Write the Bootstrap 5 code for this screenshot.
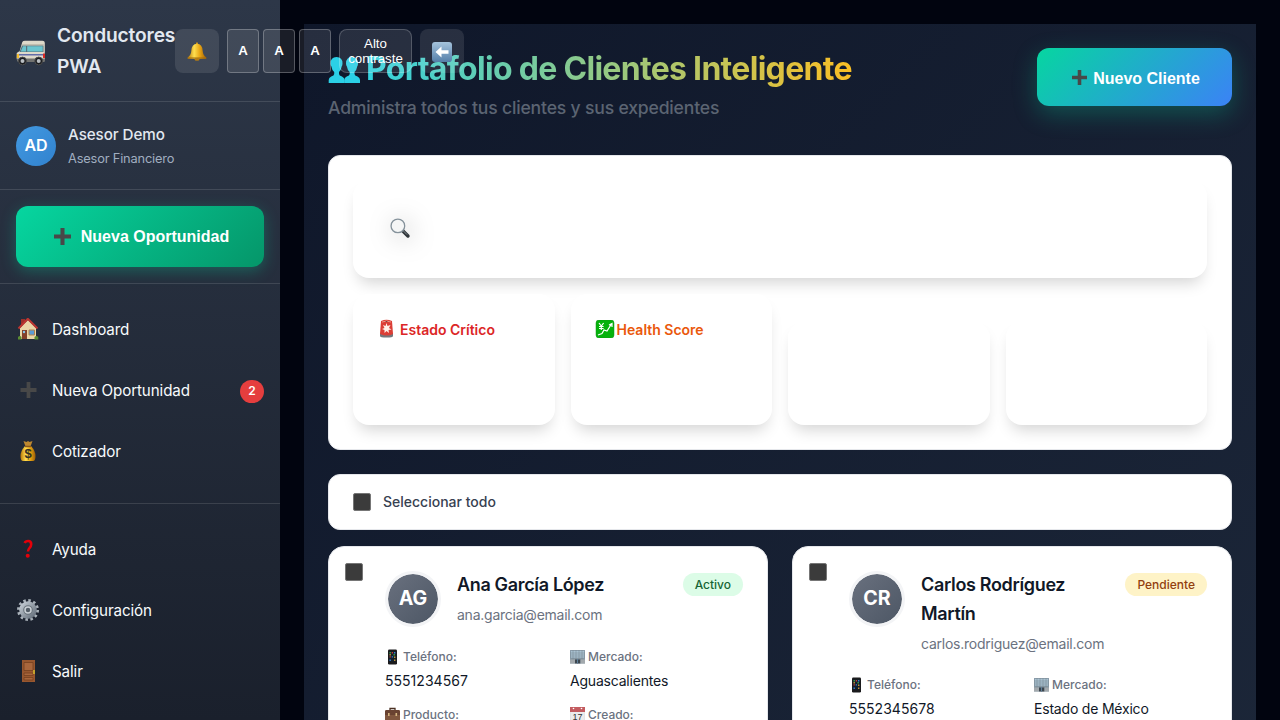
<!DOCTYPE html>
<html lang="es">
<head>
<meta charset="utf-8">
<meta name="viewport" content="width=device-width, initial-scale=1">
<title>Portafolio de Clientes</title>
<link href="https://cdn.jsdelivr.net/npm/bootstrap@5.3.0/dist/css/bootstrap.min.css" rel="stylesheet">
<style>
body{background:#01040f;font-family:Inter,"Noto Sans",sans-serif;line-height:1.6;height:100vh;overflow:hidden;color:#111827}
svg{display:block;flex:none}
.side{width:280px;flex:none;background:linear-gradient(180deg,#2d3748,#1a202c);position:relative;z-index:2}
.side section,.side header{border-bottom:1px solid rgba(255,255,255,.12)}
.head{height:102px;padding:0 16px}
.van{margin-top:5px}
.brand{font-size:19.2px;letter-spacing:-.14px;font-weight:600;line-height:31px;color:#e2e8f0;margin-left:11px;width:118px;flex:none}
.tool{height:44px;background:rgba(255,255,255,.1);border-radius:8px;flex:none;color:#fff;font-family:"Liberation Sans",Arial,sans-serif;border:0;padding:0}
.sq{width:44px;padding-top:2px}
.letter{width:32px;border:1px solid rgba(255,255,255,.26);border-radius:4px;font-weight:700;font-size:13.3px}
.contrast{width:73px;border:1px solid rgba(255,255,255,.2);font-size:13.3px;line-height:15px}
.user{height:88px;padding:0 16px}
.ava{width:40px;height:40px;background:linear-gradient(135deg,#4299e1,#3182ce);color:#fff;font-weight:600;font-size:16px}
.uname{font-size:15.2px;letter-spacing:-.08px;font-weight:500;color:#e2e8f0;line-height:24px}
.urole{font-size:12.8px;letter-spacing:-.16px;color:#a0aec0;line-height:20px;margin-top:2px}
.cta{height:61px;border:0;border-radius:12px;padding:0 0 0 3px;gap:10px;background:linear-gradient(135deg,#06d6a0,#059669);box-shadow:0 4px 15px rgba(6,214,160,.3);color:#fff;font:700 16px "Liberation Sans",Arial,sans-serif}
.menu{padding:16px 16px 20px}
.menu a{height:61px;color:#f7fafc;text-decoration:none;font-size:15.2px;letter-spacing:-.12px;gap:12px}
.menu svg{margin-top:-4px}
.pill{width:24px;height:23px;margin-top:-1px;background:#e53e3e;border-radius:12px;font-size:12px;font-weight:600;color:#fff}
.page{padding:24px;min-width:0;overflow:hidden;height:100vh}
.board{background:linear-gradient(135deg,#0f172a,#1e293b);padding:24px;height:1080px}
.title{font-size:32px;font-weight:700;letter-spacing:-.7px;line-height:41px;margin:0;white-space:nowrap;color:transparent;background:linear-gradient(90deg,#22d3ee,#fbbf24);-webkit-background-clip:text;background-clip:text;width:526px;padding-left:38px}
.people{left:0;top:9px}
.sub{font-size:17.6px;letter-spacing:-.19px;font-weight:500;color:#5b6472;line-height:28px;margin:5px 0 33px}
.newc{width:195px;height:58px;border:0;border-radius:12px;padding:3px 0 0 3px;gap:6px;background:linear-gradient(135deg,#06d6a0,#3b82f6);box-shadow:0 8px 25px rgba(6,214,160,.28);color:#fff;font:700 16px "Liberation Sans",Arial,sans-serif}
.newc svg{margin-top:-2px}
.panel{background:#fff;border:1px solid #e5e7eb;border-radius:12px}
.soft{background:#fff;border-radius:16px;box-shadow:0 10px 15px -5px rgba(0,0,0,.17)}
.find{height:98px;padding:38px 37px}
.halo{filter:drop-shadow(3px 3px 12px rgba(0,0,0,.25))}
.filters{gap:16px;margin-top:16px;align-items:flex-end}
.filters>div{flex:1 1 0;height:131px;padding:24px;font-size:14px;font-weight:600;line-height:23px;white-space:nowrap}
.filters>.low{height:104px}
.crit{color:#dc2626}.health{color:#ea580c}
.crit svg{margin:1px 5px 0 0}.health svg{margin-top:2px;margin-right:1px}
.box{width:18px;height:18px;background:#3b3b3b;border:1px solid #767676;border-radius:2px;flex:none}
.all{height:56px;padding:0 24px;font-size:14px;color:#374151;gap:12px;font-weight:450}
.client{border-radius:16px;height:500px;padding:24px 24px 24px 56px;position:relative}
.client .box{position:absolute;left:16px;top:16px}
.cava{width:56px;height:56px;border:3px solid #f3f4f6;flex:none;background:linear-gradient(135deg,#6b7280,#4b5563) border-box;background-clip:padding-box;color:#fff;font-weight:700;font-size:19.6px}
.cname{font-size:18px;letter-spacing:-.34px;font-weight:600;line-height:28.8px;color:#111827}
.mail{font-size:14px;letter-spacing:-.24px;line-height:22.4px;color:#6b7280;margin-top:4px}
.tag{font-size:12px;font-weight:500;line-height:23px;height:23px;border-radius:12px;padding:0 12px;margin-top:2px;flex:none}
.ok{background:#dcfce7;color:#166534}.wait{background:#fef3c7;color:#92400e}
.facts{display:grid;grid-template-columns:1fr 1fr;column-gap:12px;row-gap:12px;margin-top:20px}
.lab{font-size:12px;font-weight:500;color:#6b7280;line-height:19.2px;gap:3px}
.val{font-size:14px;letter-spacing:-.2px;line-height:22.4px;margin-top:4px;color:#111827}
.num{letter-spacing:.03px}
</style>
</head>
<body>
<svg width="0" height="0" class="position-absolute">
<defs>
<linearGradient id="gold" x1="0" x2="1"><stop offset="0" stop-color="#b97808"/><stop offset=".35" stop-color="#ffdf50"/><stop offset=".65" stop-color="#e8a514"/><stop offset="1" stop-color="#9c5e06"/></linearGradient>
<linearGradient id="blue" x2="0" y2="1"><stop offset="0" stop-color="#a5c3dc"/><stop offset="1" stop-color="#557fa9"/></linearGradient>
<linearGradient id="steel" x2="1" y2="1"><stop offset="0" stop-color="#c3cbd3"/><stop offset="1" stop-color="#67717d"/></linearGradient>
</defs>
<symbol id="plus" viewBox="0 0 16 16"><path d="M6.100 0h3.800v6.100H16v3.800H9.900V16H6.100V9.900H0V6.100h6.100z" fill="#484848"/></symbol>
<symbol id="phone" viewBox="0 0 14 16"><rect x="2.500" y=".5" width="9" height="15" rx="1.200" fill="#1b1b1d"/><path d="M3.500 2.500h7v10h-7z" fill="#13202b"/><path d="M4 3h1.400v1.400H4zM8 5h1.400v1.400H8z" fill="#3fa34d"/><path d="M6.200 3h1.400v1.400H6.200zM4 7.200h1.400v1.400H4z" fill="#c63a3a"/><path d="M8.500 3h1.400v1.400H8.500zM6.200 7.200h1.400v1.400H6.200zM4 10.500h1.400v1.400H4z" fill="#3d7fd0"/><path d="M4 5h1.400v1.400H4zM8.500 7.500h1.400v1.400H8.500zM8.500 10.500h1.400v1.400H8.500z" fill="#c79535"/></symbol>
<symbol id="office" viewBox="0 0 15 15"><path d="M0 1h15v13.500H0z" fill="#8b9dab"/><path d="M1 2h13v7H1z" fill="#a9c2d2"/><path d="M0 4h15M0 6h15M0 8h15M0 10h15M3 1v13M6 1v13M9 1v13M12 1v13" stroke="#75848f" stroke-width=".5"/><path d="M5 10.500h5.500v4H5z" fill="#3d474f"/><path d="M0 10.500h5v4H0zM10.500 10.500H15v4h-4.500z" fill="#a3a9ad"/><path d="M7.500 10v4.500" stroke="#5e7f9a"/></symbol>
<symbol id="case" viewBox="0 0 15 14"><path d="M5 4V1.500h5V4" fill="none" stroke="#4b3123" stroke-width="1.300"/><rect y="3" width="15" height="11" rx="1.500" fill="#80563e"/><path d="M0 4.500A1.500 1.500 0 0 1 1.500 3h12A1.500 1.500 0 0 1 15 4.500V8H0z" fill="#694231"/><path d="M3 6h1.600v3H3zM10.500 6h1.600v3h-1.600z" fill="#d5b580"/></symbol>
</svg>
<div class="d-flex vh-100 overflow-hidden">
<aside class="side vh-100">
  <header class="head d-flex align-items-center">
    <svg class="van" width="30" height="26" viewBox="0 0 30 26"><path d="M6.300 2Q7 .8 9 .7h17.500q2.200 0 2.300 2V19q0 2-2 2H3Q.7 21 .7 18.500V13l3-2z" fill="#ded9ca"/><path d="M6.500 4h21.200v.7H6z" fill="#b8b4a6"/><path d="M6 5.500h21.500V12H3.500z" fill="#56747c"/><path d="M7 6.300h3V11.500H4.800zM11.200 6.300h15.500v5.200H11.200z" fill="#6bc5cf"/><path d="M1.800 14h26.500v1.500H1.500z" fill="#626da9"/><path d="M1 14h2v4H.8z" fill="#f5bd2b"/><path d="M27 13.500h2V18h-2z" fill="#da2a25"/><path d="M.7 18.500h28.200V21q0 1-1 1H2q-1.300-1-1.300-3.500z" fill="#71726f"/><g fill="#191b1e" stroke="#4b4c4d"><circle cx="6.500" cy="21" r="3.900"/><circle cx="22.700" cy="21" r="3.900"/></g><g fill="#b9bec2"><circle cx="6.500" cy="21" r="2"/><circle cx="22.700" cy="21" r="2"/></g></svg>
    <div class="brand">Conductores PWA</div>
    <div class="d-flex gap-2">
      <button class="tool sq d-flex align-items-center justify-content-center"><svg width="20" height="19" viewBox="0 0 20 19"><path d="M9 1q1-1.500 2 0v1.500H9z" fill="#c99520"/><path d="M4.300 9Q4.500 2 10 1.700 15.500 2 15.700 9q.2 4 3.700 6.500v1.300H.600v-1.300Q4 13 4.300 9z" fill="url(#gold)"/><path d="M1 16h18" stroke="#a16a0a"/><ellipse cx="10" cy="17.400" rx="2.500" ry="1.400" fill="#b77d12"/></svg></button>
      <div class="d-flex gap-1"><button class="tool letter">A</button><button class="tool letter">A</button><button class="tool letter">A</button></div>
      <button class="tool contrast">Alto contraste</button>
      <button class="tool sq d-flex align-items-center justify-content-center"><svg width="20" height="20" viewBox="0 0 20 20"><rect width="20" height="20" rx="3" fill="url(#blue)"/><path d="M3.500 10l6-5.500v3.700h7v3.600h-7v3.700z" fill="#fff"/></svg></button>
    </div>
  </header>
  <section class="user d-flex align-items-center gap-2">
    <div class="ava rounded-circle d-flex align-items-center justify-content-center">AD</div>
    <div class="ms-1"><div class="uname">Asesor Demo</div><div class="urole">Asesor Financiero</div></div>
  </section>
  <section class="p-3">
    <button class="cta w-100 d-flex align-items-center justify-content-center"><svg width="17" height="17"><use href="#plus"/></svg><span>Nueva Oportunidad</span></button>
  </section>
  <section class="menu">
    <a href="#" class="d-flex align-items-center"><svg width="24" height="22" viewBox="0 0 24 22"><path d="M5 1h4v6H5z" fill="#9c302a"/><path d="M4 10l8-8 8 8v11H4z" fill="#ead6a8"/><path d="M2.500 10.500L11.800.8l9.700 9.700" fill="none" stroke="#bd3631" stroke-width="2"/><path d="M6 12h5v9H6z" fill="#83402a"/><path d="M13 12h5.500v5H13z" fill="#5a9bd5" stroke="#b1824f"/><circle cx="8" cy="14" r="1.200" fill="#8ac6ed"/><path d="M2 19q2-2 3.500 0v2.500H2zM18.500 19q2-2 3.800 0v2.500h-3.800z" fill="#5c8d32"/></svg>Dashboard</a>
    <a href="#" class="d-flex align-items-center"><svg width="24" height="16"><use href="#plus" x=".5" width="24" height="16"/></svg>Nueva Oportunidad<span class="pill ms-auto d-flex align-items-center justify-content-center">2</span></a>
    <a href="#" class="d-flex align-items-center"><svg width="24" height="22" viewBox="0 0 24 22"><path d="M7.500 1l3 1 1.500-1 1.500 1 3-1-2 5.500h-5z" fill="#bd8830"/><path d="M9 6h6q4.500 5 4.500 10 0 5-2.500 5H7q-2.500 0-2.500-5Q4.500 11 9 6z" fill="url(#gold)"/><path d="M9 6.500h6" stroke="#89571c" stroke-width="1.500"/><text x="12" y="18" font-family="Liberation Sans" font-weight="700" font-size="13" text-anchor="middle" fill="#333024">$</text></svg>Cotizador</a>
  </section>
  <nav class="menu">
    <a href="#" class="d-flex align-items-center"><svg width="24" height="20" viewBox="0 0 24 20"><path d="M8.700 4Q9.500 2 12.200 2q3 0 3 3.300 0 2-1.700 3.700-1.500 1.700-1.500 3.500" fill="none" stroke="#e40009" stroke-width="2.600"/><circle cx="11.700" cy="16.800" r="2" fill="#e40009"/></svg>Ayuda</a>
    <a href="#" class="d-flex align-items-center"><svg width="24" height="24" viewBox="0 0 24 24"><circle cx="12" cy="12" r="9.500" fill="none" stroke="#aab2ba" stroke-width="3" stroke-dasharray="2.500 2.475"/><circle cx="12" cy="12" r="6.800" fill="#69737c" stroke="url(#steel)" stroke-width="4"/><circle cx="12" cy="12" r="3" fill="#545e68" stroke="#cbd1d7" stroke-width="1.500"/></svg>Configuración</a>
    <a href="#" class="d-flex align-items-center"><svg width="24" height="22" viewBox="0 0 24 22"><path d="M6 0h13v22H6z" fill="#98572f"/><path d="M8 2.500h9v8H8zM8 13h9v2.500H8zM8 17.500h9V20H8z" fill="#a9663c" stroke="#75401f" stroke-width=".8"/><path d="M17 10h2v4h-2z" fill="#c4a12c"/></svg>Salir</a>
  </nav>
</aside>
<main class="page flex-grow-1">
<div class="board">
  <div class="d-flex justify-content-between align-items-start">
    <div>
      <div class="position-relative"><svg class="people position-absolute" width="33" height="27" viewBox="0 0 33 27"><g fill="#2bd0e6"><path id="bust" d="M8.500 0q6 0 6 6.500 0 1.800-.8 3-.6 4-2.700 5.500v2q0 1.500 3 2.500 2.500 1 2.500 3.500V26H.7v-3q0-2.500 2.500-3.500 3-1 3-2.500v-2Q4 13.500 3.400 9.500q-.9-1.200-.9-3Q2.500 0 8.500 0z"/><use href="#bust" x="15.500"/></g></svg><h1 class="title">Portafolio de Clientes Inteligente</h1></div>
      <p class="sub">Administra todos tus clientes y sus expedientes</p>
    </div>
    <button class="newc d-flex align-items-center justify-content-center"><svg width="15" height="15"><use href="#plus"/></svg><span>Nuevo Cliente</span></button>
  </div>
  <div class="panel p-4">
    <div class="soft find"><svg class="halo" width="21" height="21" viewBox="0 0 24 24"><path d="M14.500 14.500l6 6" stroke="#30363a" stroke-width="4" stroke-linecap="round"/><path d="M14.500 14l5 5" stroke="#8c969c"/><circle cx="9" cy="9" r="7.800" fill="#f5f6f6" stroke="#85929b" stroke-width="1.500"/></svg></div>
    <div class="filters d-flex">
      <div class="soft crit d-flex"><svg width="18" height="19" viewBox="0 0 18 19"><path d="M3 14h13v3q0 1.500-6.500 1.500T3 17z" fill="#73777c"/><path d="M4 2q5.500-2.500 11 0l1 13q-6 3-13 0z" fill="#db3e36"/><path d="M5 3q4.500-2 9 0" stroke="#ff9a8d"/><path d="M9.500 4l1 3 3-1-1.500 3 2.500 1.500-3 .5.500 3-2.500-2-2 2v-3L5 10l2.500-1L6 6l2.500 1z" fill="#fff1e9"/></svg>Estado Crítico</div>
      <div class="soft health d-flex"><svg width="21" height="18" viewBox="0 0 21 18"><rect x="1" width="18" height="18" rx="3" fill="#04b20b" stroke="#168d18" stroke-width=".5"/><path d="M3 15l4-1.500 2-3.500 3 1 4.500-7M14 5l3-1.500V7M4 3l2.300 3L8.600 3M6.300 6v4M4 6.500h4.600M4 8.500h4.600" fill="none" stroke="#fff" stroke-width="1.200"/></svg>Health Score</div>
      <div class="soft low"></div><div class="soft low"></div>
    </div>
  </div>
  <div class="panel all d-flex align-items-center mt-4"><span class="box"></span>Seleccionar todo</div>
  <div class="row gx-4 mt-3">
    <div class="col-6"><article class="panel client"><span class="box"></span>
      <div class="d-flex"><div class="cava rounded-circle d-flex align-items-center justify-content-center">AG</div><div class="ms-3 flex-grow-1"><div class="cname">Ana García López</div><div class="mail">ana.garcia@email.com</div></div><span class="tag ok">Activo</span></div>
      <div class="facts">
        <div><div class="lab d-flex align-items-center"><svg width="15" height="16"><use href="#phone"/></svg>Teléfono:</div><div class="val num">5551234567</div></div>
        <div><div class="lab d-flex align-items-center"><svg width="15" height="15"><use href="#office"/></svg>Mercado:</div><div class="val">Aguascalientes</div></div>
        <div class="lab d-flex align-items-center"><svg width="15" height="14"><use href="#case"/></svg>Producto:</div>
        <div class="lab d-flex align-items-center"><svg width="15" height="15" viewBox="0 0 15 15"><path d="M0 1h15v13.500H0z" fill="#ececec" stroke="#c8c8c8" stroke-width=".4"/><path d="M0 0h15v5H0z" fill="#c35c60"/><circle cx="3.500" cy="1.500" r=".8" fill="#fff"/><circle cx="11.500" cy="1.500" r=".8" fill="#fff"/><text x="7.500" y="13" font-family="Liberation Sans" font-size="9" text-anchor="middle" fill="#343434">17</text></svg>Creado:</div>
      </div>
    </article></div>
    <div class="col-6"><article class="panel client"><span class="box"></span>
      <div class="d-flex"><div class="cava rounded-circle d-flex align-items-center justify-content-center">CR</div><div class="mx-3 flex-grow-1"><div class="cname">Carlos Rodríguez Martín</div><div class="mail">carlos.rodriguez@email.com</div></div><span class="tag wait">Pendiente</span></div>
      <div class="facts">
        <div><div class="lab d-flex align-items-center"><svg width="15" height="16"><use href="#phone"/></svg>Teléfono:</div><div class="val num">5552345678</div></div>
        <div><div class="lab d-flex align-items-center"><svg width="15" height="15"><use href="#office"/></svg>Mercado:</div><div class="val">Estado de México</div></div>
      </div>
    </article></div>
  </div>
</div>
</main>
</div>
<script src="https://cdn.jsdelivr.net/npm/bootstrap@5.3.0/dist/js/bootstrap.bundle.min.js"></script>
</body>
</html>
